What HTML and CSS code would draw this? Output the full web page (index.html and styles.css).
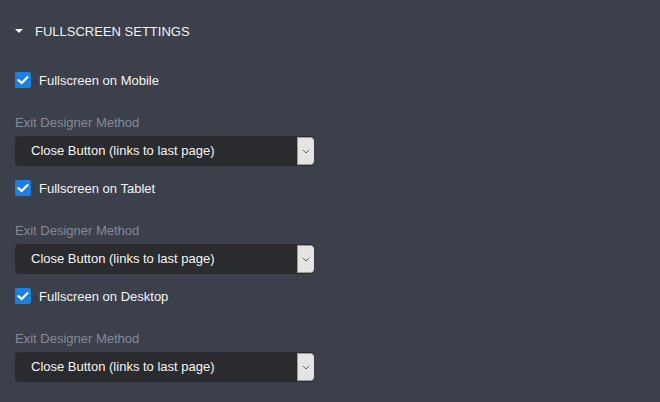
FILE: index.html
```html
<!DOCTYPE html>
<html>
<head>
<meta charset="utf-8">
<link rel="stylesheet" href="styles.css">
</head>
<body>
<div class="panel">
  <div class="section-title">
    <span class="caret"></span>
    <span class="title-text">FULLSCREEN SETTINGS</span>
  </div>

  <div class="group first">
    <label class="check-row">
      <span class="checkbox"><svg width="16" height="16" viewBox="0 0 16 16"><path d="M3.6 8.2 L6.6 11 L12.4 5.2" fill="none" stroke="#fff" stroke-width="2.2" stroke-linecap="square"/></svg></span>
      <span class="check-label">Fullscreen on Mobile</span>
    </label>
    <div class="field-label">Exit Designer Method</div>
    <div class="select">
      <span class="select-text">Close Button (links to last page)</span>
      <span class="select-btn"><svg width="8" height="5" viewBox="0 0 8 5"><path d="M0.8 0.8 L4 4 L7.2 0.8" fill="none" stroke="#606060" stroke-width="1"/></svg></span>
    </div>
  </div>

  <div class="group">
    <label class="check-row">
      <span class="checkbox"><svg width="16" height="16" viewBox="0 0 16 16"><path d="M3.6 8.2 L6.6 11 L12.4 5.2" fill="none" stroke="#fff" stroke-width="2.2" stroke-linecap="square"/></svg></span>
      <span class="check-label">Fullscreen on Tablet</span>
    </label>
    <div class="field-label">Exit Designer Method</div>
    <div class="select">
      <span class="select-text">Close Button (links to last page)</span>
      <span class="select-btn"><svg width="8" height="5" viewBox="0 0 8 5"><path d="M0.8 0.8 L4 4 L7.2 0.8" fill="none" stroke="#606060" stroke-width="1"/></svg></span>
    </div>
  </div>

  <div class="group">
    <label class="check-row">
      <span class="checkbox"><svg width="16" height="16" viewBox="0 0 16 16"><path d="M3.6 8.2 L6.6 11 L12.4 5.2" fill="none" stroke="#fff" stroke-width="2.2" stroke-linecap="square"/></svg></span>
      <span class="check-label">Fullscreen on Desktop</span>
    </label>
    <div class="field-label">Exit Designer Method</div>
    <div class="select">
      <span class="select-text">Close Button (links to last page)</span>
      <span class="select-btn"><svg width="8" height="5" viewBox="0 0 8 5"><path d="M0.8 0.8 L4 4 L7.2 0.8" fill="none" stroke="#606060" stroke-width="1"/></svg></span>
    </div>
  </div>
</div>
</body>
</html>
```

FILE: styles.css
```css
html, body {
  margin: 0;
  padding: 0;
  background: #3b404b;
  width: 660px;
  height: 402px;
  overflow: hidden;
}

.panel {
  font-family: "Liberation Sans", Arial, sans-serif;
  font-size: 13px;
  padding: 23px 0 0 15px;
  display: flex;
  flex-direction: column;
}

.section-title {
  display: flex;
  align-items: center;
  height: 16px;
  color: #f2f2f2;
}

.caret {
  width: 0;
  height: 0;
  border-left: 4px solid transparent;
  border-right: 4px solid transparent;
  border-top: 4px solid #ffffff;
  margin-right: 12px;
}

.title-text {
  font-size: 13px;
  line-height: 16px;
  padding-top: 2px;
}

.group {
  display: flex;
  flex-direction: column;
  margin-top: 14px;
}

.group.first {
  margin-top: 33px;
}

.check-row {
  display: flex;
  align-items: center;
  height: 16px;
  color: #f4f4f4;
}

.checkbox {
  width: 16px;
  height: 16px;
  border-radius: 2px;
  background: #1b80e0;
  display: flex;
  margin-right: 8px;
}

.check-label {
  line-height: 16px;
  padding-top: 2px;
}

.field-label {
  margin-top: 26px;
  height: 16px;
  line-height: 16px;
  padding-top: 1px;
  margin-bottom: -1px;
  color: #868b95;
  font-size: 13px;
}

.select {
  margin-top: 6px;
  width: 299px;
  height: 30px;
  border-radius: 4px;
  background: #2a2b2f;
  display: flex;
  align-items: stretch;
  overflow: hidden;
}

.select-text {
  flex: 1;
  padding-left: 16px;
  line-height: 30px;
  color: #f4f4f4;
  font-size: 13px;
}

.select-btn {
  width: 16px;
  background: #e4e4e4;
  border: 1px solid #9a9a9a;
  border-right: none;
  border-radius: 0 4px 4px 0;
  display: flex;
  align-items: center;
  justify-content: center;
  margin: 1px 0;
}
```
